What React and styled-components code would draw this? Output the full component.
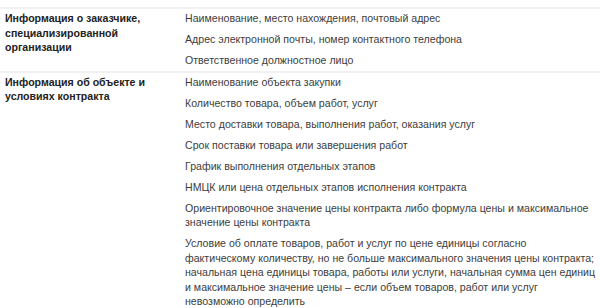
import React from "react";
import styled, { createGlobalStyle } from "styled-components";

const Global = createGlobalStyle`
  html, body { margin: 0; padding: 0; background: #fff; }
  body { font-family: "Liberation Sans", Arial, sans-serif; overflow: hidden; }
`;

const Table = styled.div`
  padding-top: 7px;
  width: 600px;
`;

const Row = styled.div`
  display: grid;
  grid-template-columns: 180px 1fr;
  border-top: 2px solid #f1f1f4;
  padding: 2px 0 3px;
`;

const Label = styled.div`
  padding: 0 15px 0 5px;
  font-size: 10.6px;
  line-height: 14.5px;
  font-weight: 700;
  color: #222;
`;

const List = styled.ul`
  list-style: none;
  margin: 0;
  padding: 0 2px 0 5px;
  display: flex;
  flex-direction: column;
  gap: 6.5px;
`;

const Item = styled.li`
  font-size: 10.6px;
  line-height: 14.5px;
  color: #3d3d3d;
  white-space: nowrap;
`;

const rows = [
  {
    label: "Информация о заказчике, специализированной организации",
    items: [
      ["Наименование, место нахождения, почтовый адрес"],
      ["Адрес электронной почты, номер контактного телефона"],
      ["Ответственное должностное лицо"],
    ],
  },
  {
    label: "Информация об объекте и условиях контракта",
    items: [
      ["Наименование объекта закупки"],
      ["Количество товара, объем работ, услуг"],
      ["Место доставки товара, выполнения работ, оказания услуг"],
      ["Срок поставки товара или завершения работ"],
      ["График выполнения отдельных этапов"],
      ["НМЦК или цена отдельных этапов исполнения контракта"],
      [
        "Ориентировочное значение цены контракта либо формула цены и максимальное",
        "значение цены контракта",
      ],
      [
        "Условие об оплате товаров, работ и услуг по цене единицы согласно",
        "фактическому количеству, но не больше максимального значения цены контракта;",
        "начальная цена единицы товара, работы или услуги, начальная сумма цен единиц",
        "и максимальное значение цены – если объем товаров, работ или услуг",
        "невозможно определить",
      ],
    ],
  },
];

export default function App() {
  return (
    <>
      <Global />
      <Table>
        {rows.map((r) => (
          <Row key={r.label}>
            <Label>{r.label}</Label>
            <List>
              {r.items.map((lines) => (
                <Item key={lines[0]}>
                  {lines.map((l, i) => (
                    <React.Fragment key={i}>
                      {i > 0 && <br />}
                      {l}
                    </React.Fragment>
                  ))}
                </Item>
              ))}
            </List>
          </Row>
        ))}
      </Table>
    </>
  );
}
